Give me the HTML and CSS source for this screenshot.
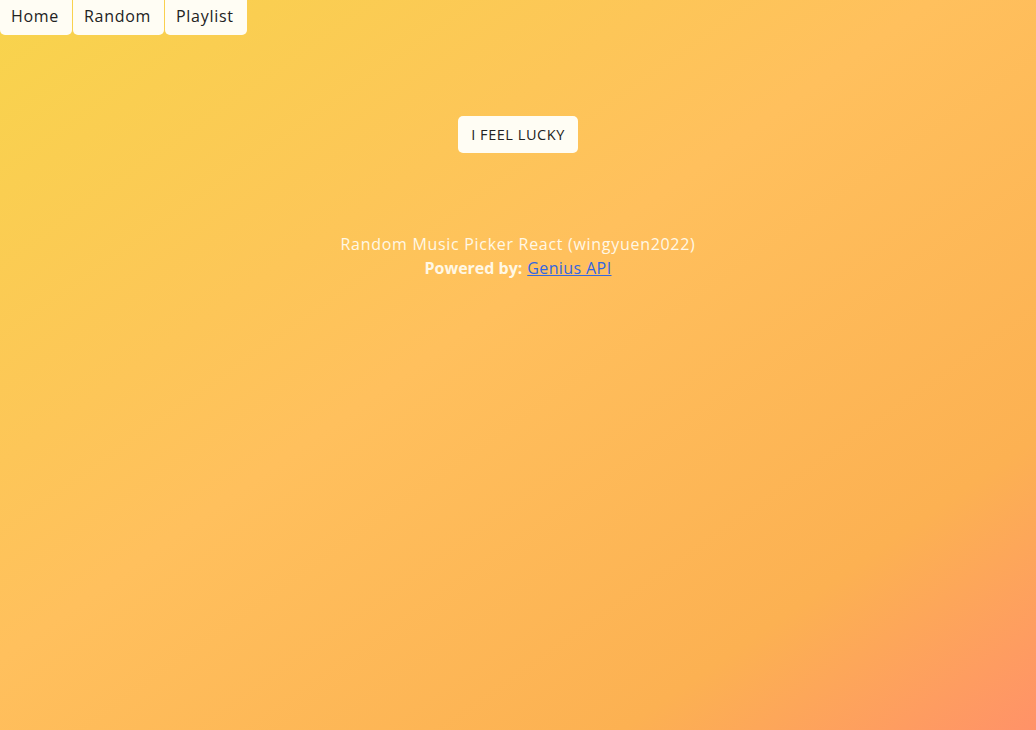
FILE: index.html
```html
<!DOCTYPE html>
<html>
<head>
<meta charset="utf-8">
<link rel="stylesheet" href="styles.css">
</head>
<body>
<nav class="nav">
  <a class="nav-btn" href="#">Home</a>
  <a class="nav-btn" href="#">Random</a>
  <a class="nav-btn" href="#">Playlist</a>
</nav>
<main class="main">
  <button class="lucky">I FEEL LUCKY</button>
  <footer class="footer">
    <div>Random Music Picker React (wingyuen2022)</div>
    <div><strong>Powered by:</strong> <a class="link" href="#">Genius API</a></div>
  </footer>
</main>
</body>
</html>
```

FILE: styles.css
```css
html, body {
  margin: 0;
  height: 100%;
}
body {
  font-family: "Open Sans", "Liberation Sans", sans-serif;
  letter-spacing: 0.7px;
  background: linear-gradient(to bottom right, #f8d44c 0%, #ffc05d 45%, #fcb152 80%, #ff9268 100%);
  min-height: 730px;
}
.nav {
  display: flex;
  gap: 1px;
}
.nav-btn {
  display: block;
  height: 35px;
  line-height: 33px;
  padding: 0 13px 0 11px;
  background: #fffdf4;
  color: #222;
  text-decoration: none;
  font-size: 16px;
  border-radius: 0 0 5px 5px;
}
.main {
  display: flex;
  flex-direction: column;
  align-items: center;
  padding-top: 81px;
}
.lucky {
  font-family: inherit;
  letter-spacing: 0.55px;
  font-size: 14.5px;
  color: #222;
  background: #fffdf4;
  border: none;
  border-radius: 5px;
  height: 37px;
  padding: 0 13px;
}
.footer {
  margin-top: 79px;
  text-align: center;
  color: #fff8e6;
  font-size: 16px;
  line-height: 24px;
}
.footer strong {
  font-weight: 700;
  letter-spacing: 0;
}
.link {
  color: #3366e0;
  letter-spacing: 0.4px;
}
```
